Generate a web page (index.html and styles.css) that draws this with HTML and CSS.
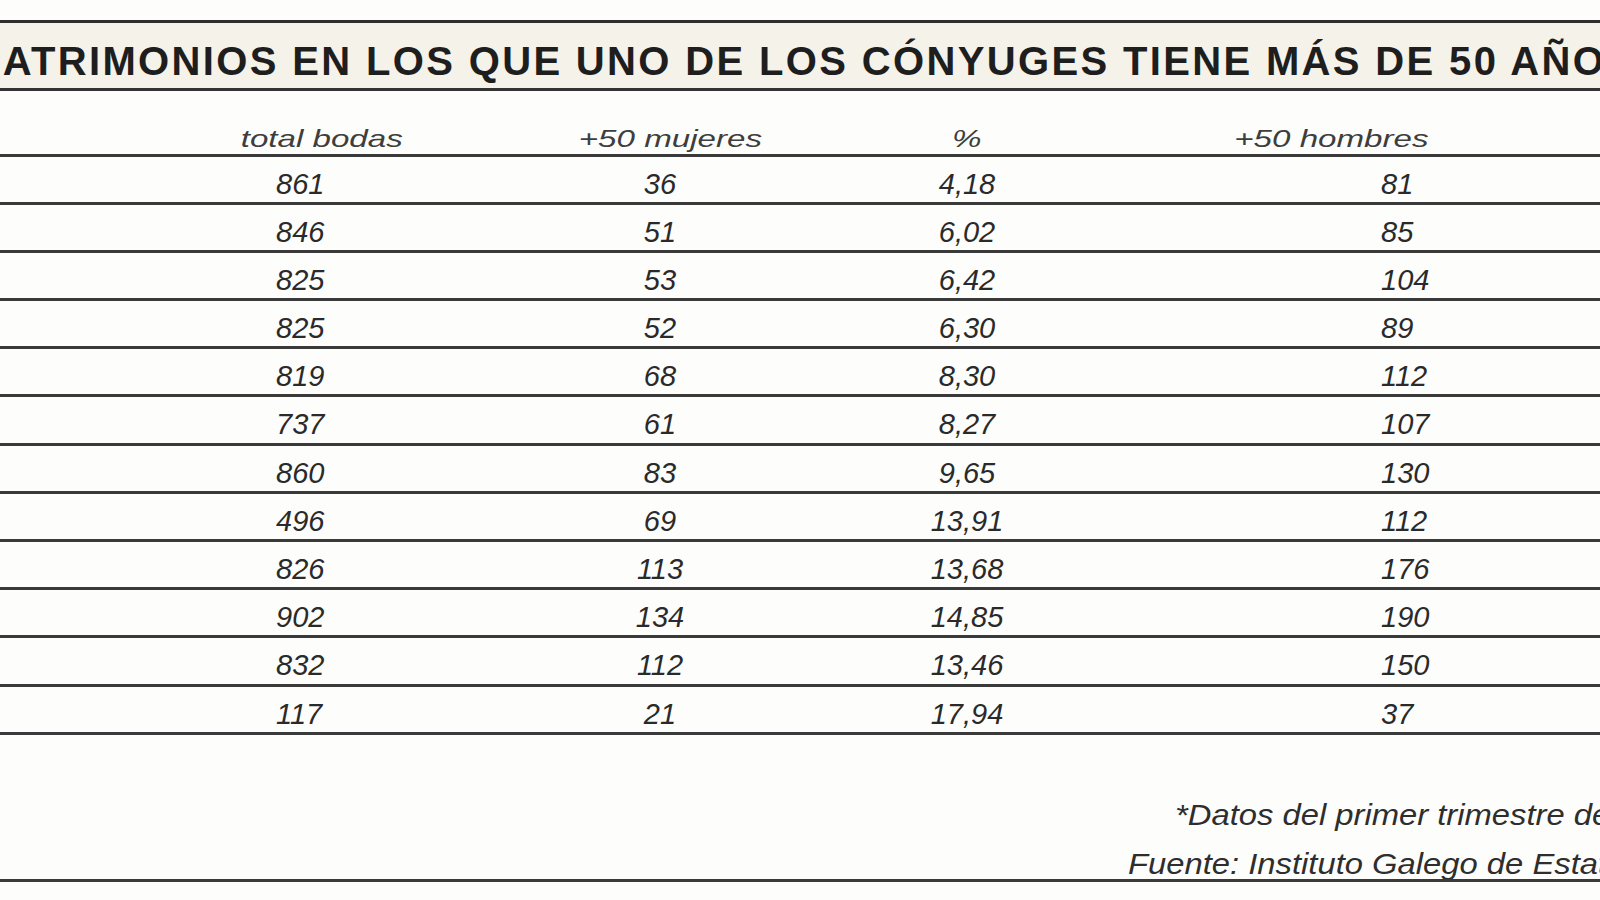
FILE: index.html
```html
<!DOCTYPE html>
<html lang="es">
<head>
<meta charset="utf-8">
<title>Matrimonios</title>
<link rel="stylesheet" href="styles.css">
</head>
<body>
<div class="page">
  <div class="title-band"><h1 class="title">MATRIMONIOS EN LOS QUE UNO DE LOS CÓNYUGES TIENE MÁS DE 50 AÑOS</h1></div>
  <div class="table">
    <div class="row head">
      <div class="cell h"><span>total bodas</span></div>
      <div class="cell h"><span>+50 mujeres</span></div>
      <div class="cell h"><span>%</span></div>
      <div class="cell h"><span>+50 hombres</span></div>
    </div>
    <div class="row"><div class="cell c1">861</div><div class="cell c2">36</div><div class="cell c3">4,18</div><div class="cell c4">81</div></div>
    <div class="row"><div class="cell c1">846</div><div class="cell c2">51</div><div class="cell c3">6,02</div><div class="cell c4">85</div></div>
    <div class="row"><div class="cell c1">825</div><div class="cell c2">53</div><div class="cell c3">6,42</div><div class="cell c4">104</div></div>
    <div class="row"><div class="cell c1">825</div><div class="cell c2">52</div><div class="cell c3">6,30</div><div class="cell c4">89</div></div>
    <div class="row"><div class="cell c1">819</div><div class="cell c2">68</div><div class="cell c3">8,30</div><div class="cell c4">112</div></div>
    <div class="row"><div class="cell c1">737</div><div class="cell c2">61</div><div class="cell c3">8,27</div><div class="cell c4">107</div></div>
    <div class="row"><div class="cell c1">860</div><div class="cell c2">83</div><div class="cell c3">9,65</div><div class="cell c4">130</div></div>
    <div class="row"><div class="cell c1">496</div><div class="cell c2">69</div><div class="cell c3">13,91</div><div class="cell c4">112</div></div>
    <div class="row"><div class="cell c1">826</div><div class="cell c2">113</div><div class="cell c3">13,68</div><div class="cell c4">176</div></div>
    <div class="row"><div class="cell c1">902</div><div class="cell c2">134</div><div class="cell c3">14,85</div><div class="cell c4">190</div></div>
    <div class="row"><div class="cell c1">832</div><div class="cell c2">112</div><div class="cell c3">13,46</div><div class="cell c4">150</div></div>
    <div class="row"><div class="cell c1">117</div><div class="cell c2">21</div><div class="cell c3">17,94</div><div class="cell c4">37</div></div>
  </div>
  <div class="notes">
    <p class="note n1"><span>*Datos del primer trimestre de</span></p>
    <p class="note n2"><span>Fuente: Instituto Galego de Estatística</span></p>
  </div>
</div>
</body>
</html>
```
FILE: styles.css
```css
* { box-sizing: border-box; }
html, body {
  margin: 0;
  padding: 0;
  width: 1600px;
  height: 900px;
  overflow: hidden;
  background: #fdfdfb;
}
.page {
  width: 1600px;
  padding-top: 20px;
  font-family: "Liberation Sans", Arial, sans-serif;
  color: #2a2a2a;
}
.title-band {
  height: 71px;
  border-top: 3px solid #2e2e2e;
  border-bottom: 3px solid #333;
  background: #f5f2ea;
  overflow: hidden;
  white-space: nowrap;
}
.title {
  margin: 0 0 0 -33px;
  padding-top: 11px;
  font-size: 40px;
  line-height: 54px;
  font-weight: bold;
  letter-spacing: 2.35px;
  color: #1e1e1e;
}
.row {
  display: grid;
  grid-template-columns: 324px 372px 222px 506px;
  padding-left: 160px;
  height: 48.2px;
  border-bottom: 3px solid #3a3a3a;
  font-style: italic;
  font-size: 29px;
  padding-top: 10px;
  line-height: 35.2px;
  white-space: nowrap;
}
.row.head {
  height: 65.5px;
  padding-top: 0;
  padding-bottom: 3px;
  align-items: end;
  font-size: 24px;
  line-height: 24px;
  color: #3e3e3e;
}
.cell.h { text-align: center; }
.cell.h span {
  display: inline-block;
  transform: scaleX(1.38);
}
.c1 { padding-left: 116px; }
.c2 { text-align: center; padding-right: 20px; }
.c3 { text-align: center; }
.c4 { padding-left: 303px; }
.notes {
  height: 147px;
  padding-top: 64px;
  border-bottom: 3px solid #3a3a3a;
  display: flex;
  flex-direction: column;
  gap: 17px;
  overflow: hidden;
}
.note {
  margin: 0;
  font-style: italic;
  font-size: 29px;
  line-height: 32px;
  white-space: nowrap;
  color: #2e2e2e;
}
.note span {
  display: inline-block;
  transform: scaleX(1.13);
  transform-origin: left center;
}
.n1 { padding-left: 1175px; }
.n2 { padding-left: 1128px; }
```
